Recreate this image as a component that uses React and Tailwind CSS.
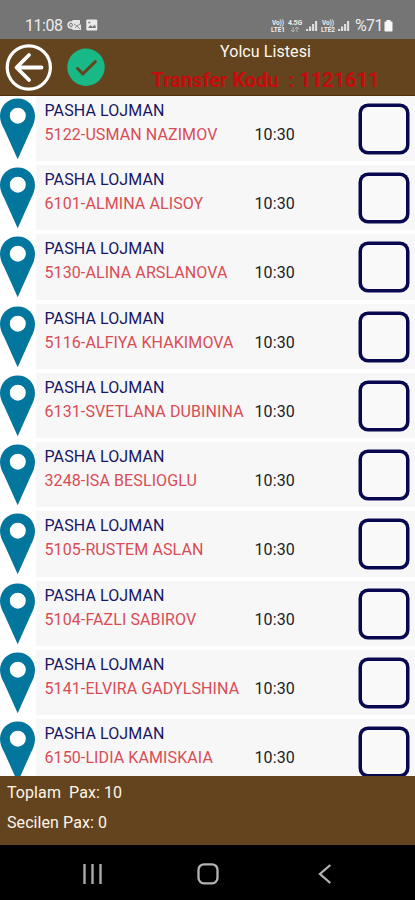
const passengers = [
  { name: '5122-USMAN NAZIMOV', time: '10:30' },
  { name: '6101-ALMINA ALISOY', time: '10:30' },
  { name: '5130-ALINA ARSLANOVA', time: '10:30' },
  { name: '5116-ALFIYA KHAKIMOVA', time: '10:30' },
  { name: '6131-SVETLANA DUBININA', time: '10:30' },
  { name: '3248-ISA BESLIOGLU', time: '10:30' },
  { name: '5105-RUSTEM ASLAN', time: '10:30' },
  { name: '5104-FAZLI SABIROV', time: '10:30' },
  { name: '5141-ELVIRA GADYLSHINA', time: '10:30' },
  { name: '6150-LIDIA KAMISKAIA', time: '10:30' },
];

function Signal() {
  return (
    <svg width="12" height="12" viewBox="0 0 12 12" fill="#dcdcdc" className="shrink-0">
      <rect x="0" y="9" width="2.2" height="2" />
      <rect x="3" y="6.5" width="2.2" height="4.5" />
      <rect x="6" y="4" width="2.2" height="7" />
      <rect x="9" y="1" width="2.2" height="10" />
    </svg>
  );
}

function Volte({ line }) {
  return (
    <div className="flex w-[16px] shrink-0 flex-col text-center text-[6.5px] leading-[8px] font-bold tracking-[-0.1px]">
      <span>Vo))</span>
      <span className="-mt-[1px]">{line}</span>
    </div>
  );
}

function StatusBar() {
  return (
    <div className="flex h-[39px] shrink-0 items-end bg-[#757575] pr-[22px] pb-[4px] pl-[25px] text-[#ececec]">
      <span className="w-[42px] text-[16px] leading-[19px] tracking-[-0.45px]">11:08</span>
      <svg width="14" height="12" viewBox="0 0 14 12" className="mb-[4px] shrink-0">
        <path d="M4 3 6 1h7v4l1 1v5H6L4 9z" fill="#e4e4e4" />
        <circle cx="4" cy="6" r="3.7" fill="#e4e4e4" />
        <ellipse cx="4" cy="6" rx="1.4" ry="1.8" fill="none" stroke="#777" />
        <path d="m7 5 3 2 3-2M8 9l2-2 3 3" fill="none" stroke="#777" strokeWidth=".8" />
      </svg>
      <svg width="12" height="12" viewBox="0 0 12 12" className="mb-[4px] ml-[5px] shrink-0">
        <rect x=".3" y=".5" width="11" height="11" rx="1.2" fill="#ececec" />
        <path d="m2 9 2.5-3 2 1.8L9 5.5 10 9z" fill="#777" />
        <rect x="2.3" y="2.8" width="2" height="1.5" fill="#777" />
      </svg>
      <div className="ml-auto flex items-center pb-[1px]">
        <Volte line="LTE1" />
        <div className="ml-[1px] flex w-[16px] flex-col items-center text-[7px] leading-[8px] font-bold tracking-[-0.2px]">
          <span>4.5G</span>
          <svg width="10" height="6" viewBox="0 0 10 6" fill="none" stroke="#b4b4b4" strokeWidth="1">
            <path d="M3 0v5M1 3l2 2 2-2M7 5V0M5 2l2-2 2 2" />
          </svg>
        </div>
        <div className="ml-[3px] flex"><Signal /></div>
        <div className="ml-[2px] flex"><Volte line="LTE2" /></div>
        <div className="ml-[2px] flex"><Signal /></div>
        <span className="ml-[5px] w-[28px] text-[16px] leading-[16px] tracking-[-0.6px]">%71</span>
        <svg width="9" height="12" viewBox="0 0 9 12" fill="#f7f7f7" className="ml-[1px] shrink-0">
          <rect x="2.5" y="0" width="4" height="2" />
          <rect x="0.5" y="1.4" width="8" height="10.2" rx="1.2" />
        </svg>
      </div>
    </div>
  );
}

function Header() {
  return (
    <header className="flex h-[57px] shrink-0 border-b border-[#50300f] bg-[#63441f]">
      <svg width="48" height="48" viewBox="0 0 48 48" fill="none" stroke="#fff" className="mt-[4px] ml-[5px] shrink-0">
        <circle cx="23.8" cy="24.5" r="21.6" strokeWidth="3.2" />
        <path d="M36.5 24.5H12M24 12 11.5 24.5 24 37" strokeWidth="3.8" strokeLinecap="round" strokeLinejoin="round" />
      </svg>
      <svg width="38" height="38" viewBox="0 0 38 38" className="mt-[9px] ml-[14px] shrink-0">
        <circle cx="19" cy="19.2" r="18.7" fill="#18b987" />
        <path d="m10.5 20.5 5.4 5.4L28.3 13.6" fill="none" stroke="#63441f" strokeWidth="3" strokeLinecap="round" />
      </svg>
      <div className="ml-[11px] flex w-[299px] flex-col items-center whitespace-pre">
        <h1 className="mt-[3px] text-[16px] leading-[19px] tracking-[0.08px] text-[#fff8ee]">Yolcu Listesi</h1>
        <p className="mt-[7px] text-[20px] leading-[24px] font-bold text-[#c70b0b]">{'Transfer Kodu  : 1121611'}</p>
      </div>
    </header>
  );
}

function Passenger({ name, time }) {
  return (
    <li className="flex h-[69.22px] shrink-0 border-b-[4px] border-white bg-[#f7f7f7]">
      <div className="w-[36px] shrink-0 bg-white">
        <svg width="36" height="64" viewBox="0 0 36 64" className="mt-[2px]">
          <path
            fillRule="evenodd"
            fill="#03769d"
            d="M17.7.5C7.7.5 0 8.2 0 18c0 5.3 2.2 9.5 4.3 13.5l13.4 29.7L31 31.5c2.1-4 4-8.2 4-13.5C35 8.2 27.7.5 17.7.5Zm.1 9.2a8 8 0 1 1 0 16 8 8 0 0 1 0-16Z"
          />
        </svg>
      </div>
      <div className="w-[218px] shrink-0 pt-[5px] pl-[8.5px] text-[16px] tracking-[0.1px] whitespace-nowrap">
        <p className="leading-[20px] text-[#161663]">PASHA LOJMAN</p>
        <p className="mt-[4px] leading-[20px] text-[#d94c55]">{name}</p>
      </div>
      <span className="w-[105px] shrink-0 pt-[29px] pl-[0.5px] text-[16px] leading-[20px] tracking-[0.1px] text-[#222]">{time}</span>
      <div className="mt-[8px] size-[50px] shrink-0 rounded-[9px] border-[3px] border-[#08084f] bg-[#f9f9f9] shadow-[0_0_0_0.5px_#08084f]" />
    </li>
  );
}

export default function App() {
  return (
    <div className="flex h-[900px] w-[415px] flex-col overflow-hidden bg-white font-['Roboto',sans-serif]">
      <StatusBar />
      <Header />
      <ul className="flex h-[680px] shrink-0 flex-col overflow-hidden">
        {passengers.map((p) => (
          <Passenger key={p.name} name={p.name} time={p.time} />
        ))}
      </ul>
      <footer className="flex h-[69px] shrink-0 flex-col bg-[#63441f] pt-[7px] pl-[7px] text-[16px] tracking-[0.08px] whitespace-pre text-[#fff5e8]">
        <p className="leading-[20px]">{'Toplam  Pax: 10'}</p>
        <p className="mt-[10px] leading-[20px]">Secilen Pax: 0</p>
      </footer>
      <nav className="flex h-[55px] shrink-0 items-center bg-black pt-[2px] pl-[82px]">
        <svg width="22" height="20" viewBox="0 0 22 20" stroke="#aaa" strokeWidth="2.4">
          <path d="M2.5 0v20M10.5 0v20M18.5 0v20" />
        </svg>
        <svg width="22" height="22" viewBox="0 0 22 22" fill="none" stroke="#b4b4b4" strokeWidth="2.3" className="ml-[93px]">
          <rect x="1.5" y="1.3" width="19" height="19" rx="5.5" />
        </svg>
        <svg width="14" height="20" viewBox="0 0 14 20" fill="none" stroke="#b4b4b4" strokeWidth="2.3" className="ml-[99px]">
          <path d="M12.3 1 2 10l10.3 9" />
        </svg>
      </nav>
    </div>
  );
}
